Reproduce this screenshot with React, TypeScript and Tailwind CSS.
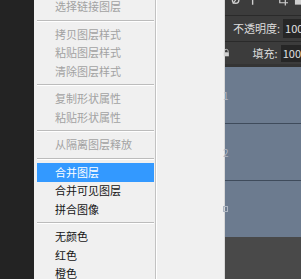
import { Fragment } from "react";

type Entry = { label: string; disabled?: boolean; active?: boolean } | "sep";

const entries: Entry[] = [
  { label: "选择链接图层", disabled: true },
  "sep",
  { label: "拷贝图层样式", disabled: true },
  { label: "粘贴图层样式", disabled: true },
  { label: "清除图层样式", disabled: true },
  "sep",
  { label: "复制形状属性", disabled: true },
  { label: "粘贴形状属性", disabled: true },
  "sep",
  { label: "从隔离图层释放", disabled: true },
  "sep",
  { label: "合并图层", active: true },
  { label: "合并可见图层" },
  { label: "拼合图像" },
  "sep",
  { label: "无颜色" },
  { label: "红色" },
  { label: "橙色" },
];

function ToolIcons() {
  // only the bottom halves of the toolbar icons are in view
  return (
    <div className="flex h-[15px] items-start overflow-hidden">
      <svg className="-mt-[6px] ml-[6px]" width="10" height="12" viewBox="0 0 10 12">
        <circle cx="5" cy="6" r="3.5" fill="none" stroke="#cfcfcf" strokeWidth="1.5" />
        <path d="M2 10 L8 2" stroke="#cfcfcf" strokeWidth="1.2" />
      </svg>
      <svg className="-mt-[6px] ml-[8px]" width="10" height="12" viewBox="0 0 10 12">
        <path d="M1 1 H9 M5 1 V11" stroke="#cfcfcf" strokeWidth="1.5" />
      </svg>
      <svg className="-mt-[6px] ml-[19px]" width="12" height="12" viewBox="0 0 12 12">
        <path d="M3 0 V9 H12 M0 3 H9 V12" fill="none" stroke="#cfcfcf" strokeWidth="1.3" />
      </svg>
      <svg className="-mt-[6px] ml-[6px]" width="8" height="12" viewBox="0 0 8 12">
        <rect x="1" y="1" width="7" height="10" fill="#cfcfcf" />
      </svg>
    </div>
  );
}

export default function App() {
  return (
    <div
      className="flex h-[279px] w-[301px] overflow-hidden bg-[#242424]"
      style={{ fontFamily: '"Noto Sans CJK SC", "Noto Sans", sans-serif' }}
    >
      {/* Dark canvas edge */}
      <div className="w-[34px] shrink-0 bg-[#232323]" />

      {/* Context menu */}
      <div className="flex w-[190px] shrink-0 bg-[#f0f0f0]">
        <div className="-mt-[2.5px] w-[121px] shrink-0 pl-[3px] pr-[1px]">
          {entries.map((e, i) =>
            e === "sep" ? (
              <div key={i} className="flex h-[9px] flex-col justify-center">
                <div className="h-px bg-[#bcbcbc]" />
                <div className="h-px bg-white" />
              </div>
            ) : (
              <Fragment key={i}>
                <div
                  className={`flex h-[18.5px] items-center pl-[18px] text-[11px] leading-none ${
                    e.active
                      ? "bg-[#3399ff] text-white"
                      : e.disabled
                        ? "text-[#a2a2a2]"
                        : "text-[#141414]"
                  }`}
                >
                  {e.label}
                </div>
              </Fragment>
            )
          )}
        </div>
        <div className="w-px bg-[#c2c2c2]" />
        <div className="w-px bg-white" />
        <div className="flex-1" />
      </div>
      <div className="w-px shrink-0 bg-[#d8d8d8]" />

      {/* Layers panel */}
      <div className="flex min-w-0 flex-1 flex-col bg-[#3c3c3c]">
        <ToolIcons />
        <div className="h-px bg-[#2a2a2a]" />
        <div className="flex h-[25px] items-center pl-[8px] text-[11px] text-[#dcdcdc]">
          <span className="whitespace-nowrap">不透明度:</span>
          <div className="ml-[3px] flex h-[19px] flex-1 items-center bg-[#262626] pl-[2px] text-[#e0e0e0]">
            100
          </div>
        </div>
        <div className="h-px bg-[#2a2a2a]" />
        <div className="flex h-[22px] items-center text-[11px] text-[#dcdcdc]">
          <svg className="-ml-[2px]" width="9" height="10" viewBox="0 0 9 10">
            <path d="M2 4 V2.5 a2.5 2.5 0 0 1 5 0 V4" fill="none" stroke="#d0d0d0" strokeWidth="1.2" />
            <rect x="1" y="4" width="7" height="5.5" fill="#d0d0d0" />
          </svg>
          <span className="ml-[23px] whitespace-nowrap">填充:</span>
          <div className="ml-[3px] flex h-[17px] flex-1 items-center bg-[#262626] pl-[2px] text-[#e0e0e0]">
            100
          </div>
        </div>
        <div className="h-[3px] bg-[#343434]" />
        <div className="flex h-[56px] items-center bg-[#6c7b8f] text-[10px] text-[#aeb6c2]">
          <span className="-ml-[2px]">1</span>
        </div>
        <div className="h-px bg-[#3f4b5b]" />
        <div className="flex h-[56px] items-center bg-[#6c7b8f] text-[10px] text-[#aeb6c2]">
          <span className="-ml-[2px]">2</span>
        </div>
        <div className="h-px bg-[#3f4b5b]" />
        <div className="flex h-[56px] items-center bg-[#6c7b8f]">
          <div className="-ml-[2px] h-[6px] w-[5px] border border-[#aeb6c2]" />
        </div>
        <div className="flex-1 bg-[#494949]" />
      </div>
    </div>
  );
}
